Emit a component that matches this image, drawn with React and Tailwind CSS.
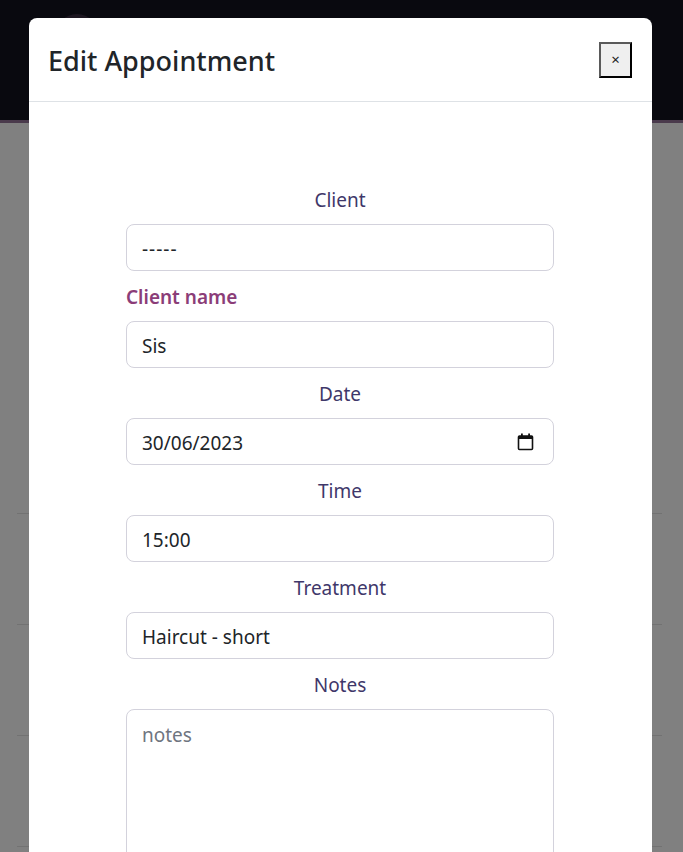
const fields = [
  { label: "Client", value: "-----", kind: "center" },
  { label: "Client name", value: "Sis", kind: "left" },
  { label: "Date", value: "30/06/2023", kind: "center", date: true },
  { label: "Time", value: "15:00", kind: "center" },
  { label: "Treatment", value: "Haircut - short", kind: "center" },
];

function CalendarIcon() {
  return (
    <svg width="17" height="18" viewBox="0 0 17 18" fill="none">
      <rect x="1.5" y="3" width="14" height="13.5" rx="1" stroke="#111" strokeWidth="1.6" />
      <rect x="1.5" y="3" width="14" height="3" fill="#111" />
      <rect x="4" y="0.5" width="1.8" height="3.5" fill="#111" />
      <rect x="11.2" y="0.5" width="1.8" height="3.5" fill="#111" />
    </svg>
  );
}

export default function App() {
  const font = { fontFamily: '"Noto Sans", "Open Sans", sans-serif' };

  return (
    <div className="relative h-[852px] overflow-hidden bg-[#808080]" style={font}>
      <div className="h-[123px] bg-[#09090f] border-b-[3px] border-[#4a3a4c]">
        <div className="ml-[55px] pt-[14px]">
          <div className="w-[44px] h-[44px] rounded-full bg-[#1c1620]" />
        </div>
      </div>

      <div className="mx-[17px] mr-[21px] pt-[390px]">
        <div className="h-[111px] border-t border-[#727272]" />
        <div className="h-[111px] border-t border-[#727272]" />
        <div className="h-[111px] border-t border-[#727272]" />
        <div className="h-[111px] border-t border-[#727272]" />
      </div>

      <div className="absolute left-[29px] top-[18px] w-[623px] h-[900px] rounded-lg bg-white">
        <div className="flex items-center justify-between h-[84px] pl-[19px] pr-5 border-b border-[#dee2e6]">
          <h2 className="text-[27px] font-medium text-[#212529] leading-tight pt-[2px]">Edit Appointment</h2>
          <button className="flex items-center justify-center w-[33px] h-[36px] bg-[#efefef] border-2 border-t-[#5a5a5a] border-l-[#5a5a5a] border-r-black border-b-black text-[15px] text-[#222]">
            ×
          </button>
        </div>

        <div className="pt-[72px] pl-[97px]">
          <div className="w-[428px] flex flex-col">
            {fields.map((f) => (
              <div key={f.label} className="flex flex-col">
                {f.kind === "left" ? (
                  <div className="h-[50px] flex items-center pt-[3px] text-[19px] font-semibold text-[#8b3d78]">
                    {f.label}
                  </div>
                ) : (
                  <div className="h-[50px] flex items-center justify-center pt-[3px] text-[19px] text-[#3f386a]">
                    {f.label}
                  </div>
                )}
                <div className="h-[47px] flex items-center justify-between pl-[15px] pr-4 pt-[3px] rounded-lg border border-[#d3d2dc] text-[19px] text-[#212529]">
                  <span className={f.value === "-----" ? "tracking-[1px]" : ""}>{f.value}</span>
                  {f.date && (
                    <span className="mr-[3px] -mt-[2px]">
                      <CalendarIcon />
                    </span>
                  )}
                </div>
              </div>
            ))}
            <div className="h-[50px] flex items-center justify-center pt-[3px] text-[19px] text-[#3f386a]">
              Notes
            </div>
            <div className="h-[200px] pl-[15px] pr-4 pt-[11px] rounded-lg border border-[#d3d2dc] text-[19px] text-[#6f7580]">
              notes
            </div>
          </div>
        </div>
      </div>
    </div>
  );
}
